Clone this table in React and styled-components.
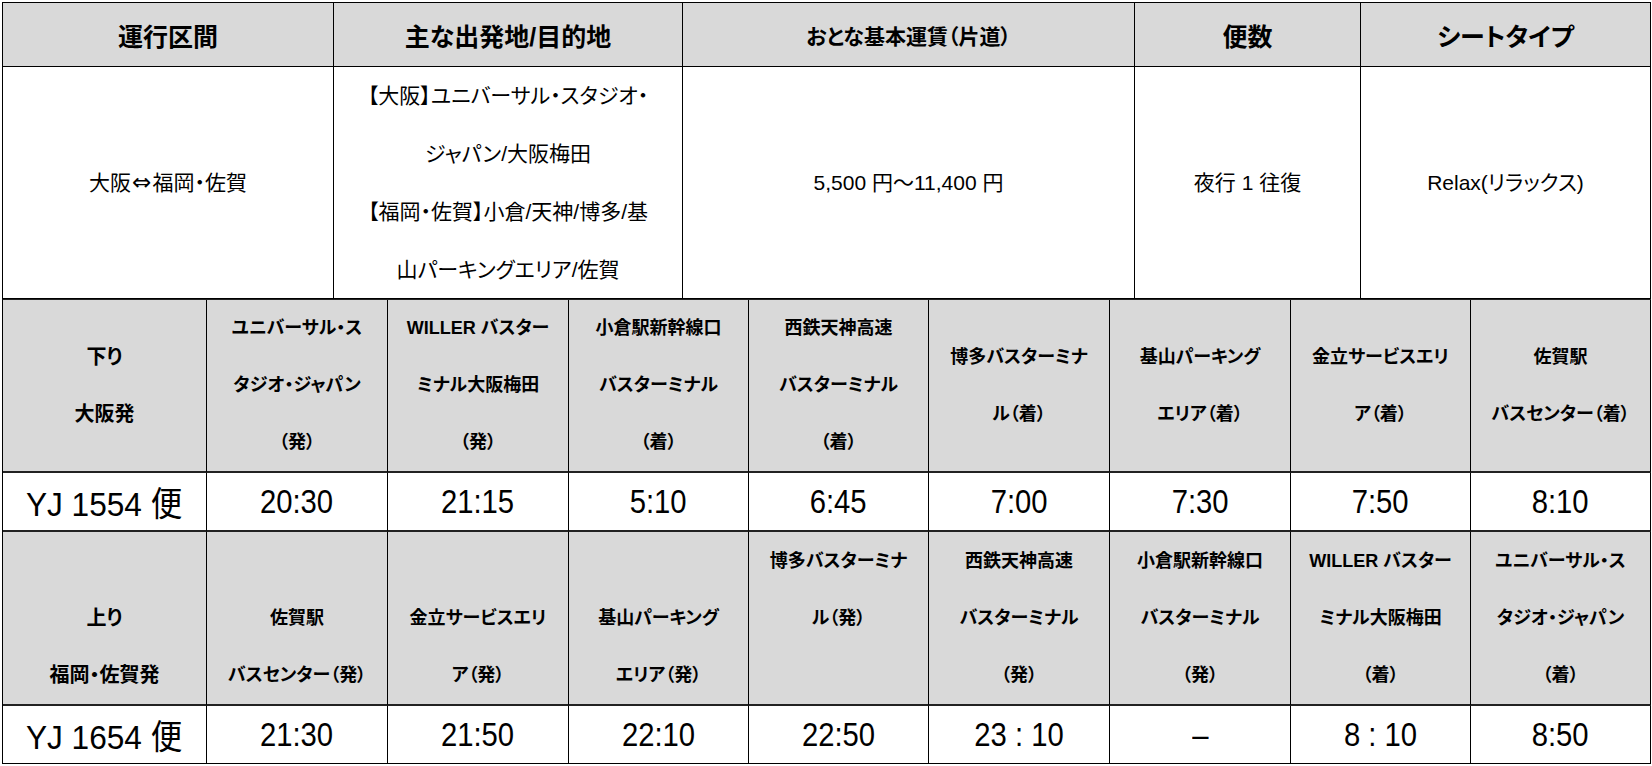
import React from 'react'
import styled, {createGlobalStyle} from 'styled-components'

const GlobalStyle = createGlobalStyle`
    body {
        margin: 0;
        background: #fff;
        color: #000;
        font-family: "Liberation Sans", "Noto Sans CJK JP", sans-serif;
        font-feature-settings: "palt";
    }
`

const Page = styled.div`
    display: flex;
    flex-direction: column;
    width: 1649px;
    padding: 2px 0 0 2px;
`

const SummaryGrid = styled.div`
    display: grid;
    grid-template-columns: 331px 349px 452px 226px 290px;
    grid-template-rows: 64px 232px;
    border-left: 1px solid #000;
    border-top: 1px solid #000;
`

const TimeGrid = styled.div`
    display: grid;
    grid-template-columns: 204px repeat(2, 181px) repeat(2, 180px) repeat(2, 181px) repeat(2, 180px);
    grid-template-rows: 173px 59px 174px 58px;
    border-left: 1px solid #000;
    border-top: 1px solid #222;
`

const Cell = styled.div`
    display: flex;
    flex-direction: column;
    align-items: center;
    justify-content: center;
    text-align: center;
    border-right: 1px solid #000;
    border-bottom: ${p => p.$thick ? '2px solid #222' : '1px solid #000'};
    background: ${p => p.$head ? '#d9d9d9' : '#fff'};
    overflow: hidden;
`

const Title = styled.span`
    font-size: ${p => p.$size || 25}px;
    font-weight: 700;
    white-space: nowrap;
`

const Line = styled.span`
    display: block;
    font-size: ${p => p.$size}px;
    font-weight: ${p => p.$bold ? 700 : 400};
    line-height: ${p => p.$lh}px;
    white-space: nowrap;
`

const Arrow = styled.span`
    font-family: "DejaVu Sans", sans-serif;
    font-size: 23px;
    line-height: 1;
    margin: 0 1px;
`

const Time = styled.span`
    display: inline-block;
    font-size: 34px;
    white-space: nowrap;
    transform: scaleX(${p => p.$label ? 0.93 : 0.86});
`

const summary = {
    heads: [
        {text: '運行区間'},
        {text: '主な出発地/目的地'},
        {text: 'おとな基本運賃（片道）', size: 21},
        {text: '便数'},
        {text: 'シートタイプ'},
    ],
    body: [
        [<>大阪<Arrow>⇔</Arrow>福岡・佐賀</>],
        ['【大阪】ユニバーサル・スタジオ・', 'ジャパン/大阪梅田', '【福岡・佐賀】小倉/天神/博多/基', '山パーキングエリア/佐賀'],
        ['5,500 円～11,400 円'],
        ['夜行 1 往復'],
        ['Relax(リラックス)'],
    ],
}

const rows = [
    {
        heads: [
            ['下り', '大阪発'],
            ['ユニバーサル・ス', 'タジオ・ジャパン', '（発）'],
            ['WILLER バスター', 'ミナル大阪梅田', '（発）'],
            ['小倉駅新幹線口', 'バスターミナル', '（着）'],
            ['西鉄天神高速', 'バスターミナル', '（着）'],
            ['博多バスターミナ', 'ル（着）'],
            ['基山パーキング', 'エリア（着）'],
            ['金立サービスエリ', 'ア（着）'],
            ['佐賀駅', 'バスセンター（着）'],
        ],
        times: ['YJ 1554 便', '20:30', '21:15', '5:10', '6:45', '7:00', '7:30', '7:50', '8:10'],
    },
    {
        heads: [
            ['', '上り', '福岡・佐賀発'],
            ['', '佐賀駅', 'バスセンター（発）'],
            ['', '金立サービスエリ', 'ア（発）'],
            ['', '基山パーキング', 'エリア（発）'],
            ['博多バスターミナ', 'ル（発）', ''],
            ['西鉄天神高速', 'バスターミナル', '（発）'],
            ['小倉駅新幹線口', 'バスターミナル', '（発）'],
            ['WILLER バスター', 'ミナル大阪梅田', '（着）'],
            ['ユニバーサル・ス', 'タジオ・ジャパン', '（着）'],
        ],
        times: ['YJ 1654 便', '21:30', '21:50', '22:10', '22:50', '23 : 10', '–', '8 : 10', '8:50'],
    },
]

function App() {
    return (
        <Page>
            <GlobalStyle/>
            <SummaryGrid>
                {summary.heads.map((h, i) => (
                    <Cell $head key={'h' + i}>
                        <Title $size={h.size}>{h.text}</Title>
                    </Cell>
                ))}
                {summary.body.map((lines, i) => (
                    <Cell key={'b' + i}>
                        {lines.map((l, j) => <Line key={j} $size={21} $lh={58}>{l}</Line>)}
                    </Cell>
                ))}
            </SummaryGrid>
            <TimeGrid>
                {rows.map((row, r) => (
                    <React.Fragment key={r}>
                        {row.heads.map((lines, i) => (
                            <Cell $head $thick key={'h' + i}>
                                {lines.map((l, j) => (
                                    <Line key={j} $size={i === 0 ? 20 : 18} $bold $lh={57}>{l || '\u00a0'}</Line>
                                ))}
                            </Cell>
                        ))}
                        {row.times.map((t, i) => (
                            <Cell $thick={r === 0} key={'t' + i}>
                                <Time $label={i === 0}>{t}</Time>
                            </Cell>
                        ))}
                    </React.Fragment>
                ))}
            </TimeGrid>
        </Page>
    )
}

export default App
